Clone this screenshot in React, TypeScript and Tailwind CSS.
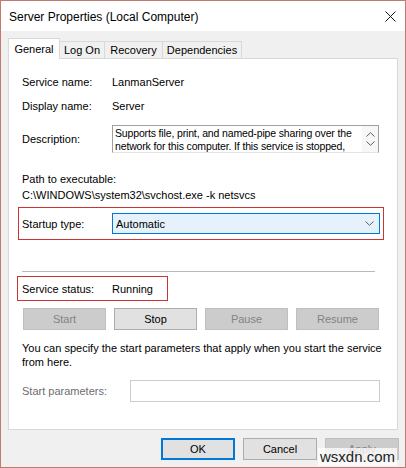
import React from "react";

const Btn = ({ label, disabled, w, focus }: { label: string; disabled?: boolean; w: string; focus?: boolean }) => (
  <div
    className={`${w} h-[22px] flex items-center justify-center ${
      disabled
        ? "bg-[#cccccc] border border-[#bfbfbf] text-[#838383]"
        : focus
          ? "bg-[#e1e1e1] border-2 border-[#0078d7] text-black"
          : "bg-[#e1e1e1] border border-[#adadad] text-black"
    }`}
  >
    {label}
  </div>
);

const Chevron = ({ up }: { up?: boolean }) => (
  <svg width="9" height="5" viewBox="0 0 9 5" fill="none" stroke="#606060" strokeWidth="1">
    {up ? <path d="M0.5 4.5 L4.5 0.7 L8.5 4.5" /> : <path d="M0.5 0.5 L4.5 4.3 L8.5 0.5" />}
  </svg>
);

export default function App() {
  return (
    <div className="relative w-[406px] h-[468px] border border-[#c4796e] bg-[#f0f0f0] flex flex-col overflow-hidden font-['Liberation_Sans',Arial,sans-serif] text-[11px] text-black">
      {/* title bar */}
      <div className="h-[30px] bg-white flex items-center justify-between pl-[8px] pr-[9px]">
        <span className="text-[12px] pt-[1px]">Server Properties (Local Computer)</span>
        <svg width="11" height="11" viewBox="0 0 11 11" stroke="#111" strokeWidth="1">
          <path d="M0.5 0.5 L10.5 10.5 M10.5 0.5 L0.5 10.5" />
        </svg>
      </div>

      <div className="flex flex-col px-[7px]">
        {/* tabs */}
        <div className="mt-[7px] h-[20px] flex items-end">
          <div className="relative z-10 -mb-px h-[21px] w-[52px] border border-b-0 border-[#d9d9d9] bg-white flex items-center justify-center">
            General
          </div>
          <div className="h-[17px] w-[45px] border-t border-r border-[#d9d9d9] bg-[#f0f0f0] flex items-center justify-center">
            Log On
          </div>
          <div className="h-[17px] w-[58px] border-t border-r border-[#d9d9d9] bg-[#f0f0f0] flex items-center justify-center">
            Recovery
          </div>
          <div className="h-[17px] w-[79px] border-t border-r border-[#d9d9d9] bg-[#f0f0f0] flex items-center justify-center">
            Dependencies
          </div>
        </div>

        {/* panel */}
        <div className="w-[390px] h-[372px] border border-[#d9d9d9] bg-white flex flex-col leading-[16px]">
          <div className="mt-[15px] ml-[13px] flex">
            <span className="w-[90px]">Service name:</span>
            <span>LanmanServer</span>
          </div>
          <div className="mt-[8px] ml-[13px] flex">
            <span className="w-[90px]">Display name:</span>
            <span>Server</span>
          </div>
          <div className="mt-[11px] ml-[13px] flex items-center">
            <span className="w-[90px]">Description:</span>
            <div className="w-[267px] h-[28px] border border-[#a0a0a0] border-b-[#e3e3e3] flex">
              <div className="flex-1 overflow-hidden whitespace-nowrap text-[10.5px] tracking-[-0.15px] leading-[13px] pl-[2px] pt-[1px]">
                Supports file, print, and named-pipe sharing over the
                <br />
                network for this computer. If this service is stopped,
              </div>
              <div className="w-[16px] flex flex-col items-center justify-between py-[6px] bg-[#f7f7f7]">
                <Chevron up />
                <Chevron />
              </div>
            </div>
          </div>

          <div className="mt-[18px] ml-[13px]">Path to executable:</div>
          <div className="ml-[13px]">C:\WINDOWS\system32\svchost.exe -k netsvcs</div>

          <div className="mt-[4px] ml-[9px] w-[366px] h-[33px] border border-[#cc3333] flex items-center px-[3px]">
            <span className="w-[90px]">Startup type:</span>
            <div className="flex-1 h-[21px] border border-[#0078d7] bg-[#e5f1fb] flex items-center justify-between pl-[3px] pr-[5px]">
              <span>Automatic</span>
              <Chevron />
            </div>
          </div>

          <div className="mt-[31px] ml-[13px] w-[353px] h-px bg-[#b9b9b9]" />

          <div className="mt-[4px] ml-[8px] w-[151px] h-[25px] border border-[#cc3333] flex items-center pl-[4px]">
            <span className="w-[90px]">Service status:</span>
            <span>Running</span>
          </div>

          <div className="mt-[7px] ml-[14px] flex gap-[8px]">
            <Btn label="Start" disabled w="w-[83px]" />
            <Btn label="Stop" w="w-[83px]" />
            <Btn label="Pause" disabled w="w-[83px]" />
            <Btn label="Resume" disabled w="w-[83px]" />
          </div>

          <div className="mt-[11px] ml-[13px] leading-[14px]">
            You can specify the start parameters that apply when you start the service
            <br />
            from here.
          </div>

          <div className="mt-[11px] ml-[13px] flex items-center">
            <span className="w-[108px] text-[#6d6d6d]">Start parameters:</span>
            <div className="w-[250px] h-[22px] border border-[#cccccc] bg-white" />
          </div>
        </div>

        {/* dialog buttons */}
        <div className="mt-[8px] -mr-px flex justify-end gap-[8px]">
          <Btn label="OK" focus w="w-[74px]" />
          <Btn label="Cancel" w="w-[74px]" />
          <Btn label="Apply" disabled w="w-[74px]" />
        </div>
      </div>

      <span className="absolute right-[8px] bottom-[1px] px-[2px] bg-white/75 text-[15px] leading-[18px] text-[#222]">
        wsxdn.com
      </span>
    </div>
  );
}
